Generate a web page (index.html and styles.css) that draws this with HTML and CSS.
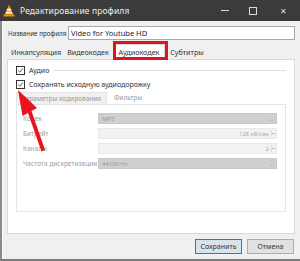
FILE: index.html
```html
<!DOCTYPE html>
<html lang="ru">
<head>
<meta charset="utf-8">
<link rel="stylesheet" href="styles.css">
</head>
<body>
<div class="win">
  <div class="titlebar">
    <svg class="logo" width="12" height="13" viewBox="0 0 12 13">
      <path d="M6 0.5 L10.5 11 L1.5 11 Z" fill="#f08a00"/>
      <path d="M4.2 4.8 L7.8 4.8 L8.4 6.4 L3.6 6.4 Z" fill="#fff"/>
      <path d="M3.1 7.8 L8.9 7.8 L9.5 9.4 L2.5 9.4 Z" fill="#fff"/>
      <rect x="0.5" y="10.5" width="11" height="2" rx="0.6" fill="#f08a00"/>
    </svg>
    <span class="title">Редактирование профиля</span>
    <div class="ctrls">
      <span class="min"></span>
      <span class="max"></span>
      <span class="close">✕</span>
    </div>
  </div>
  <div class="content">
    <div class="namerow">
      <span class="lbl">Название профиля</span>
      <div class="input">Video for Youtube HD</div>
    </div>
    <div class="tabs">
      <span class="tab t1">Инкапсуляция</span>
      <span class="tab t2">Видеокодек</span>
      <span class="tab active">Аудиокодек</span>
      <span class="tab t4">Субтитры</span>
    </div>
    <div class="panel">
      <div class="chk-row group">
        <span class="cb"><svg viewBox="0 0 9 9"><path d="M1.5 4.6 L3.6 6.6 L7.6 2" fill="none" stroke="#333" stroke-width="1.1"/></svg></span>
        <span>Аудио</span>
        <span class="gline"></span>
      </div>
      <div class="chk-row">
        <span class="cb"><svg viewBox="0 0 9 9"><path d="M1.5 4.6 L3.6 6.6 L7.6 2" fill="none" stroke="#333" stroke-width="1.1"/></svg></span>
        <span>Сохранять исходную аудиодорожку</span>
      </div>
      <div class="subtabs">
        <span class="stab active">Параметры кодирования</span>
        <span class="stab">Фильтры</span>
      </div>
      <div class="subpanel">
        <div class="frow"><span class="flbl">Кодек</span><div class="combo">MP3<span class="arr">⌄</span></div></div>
        <div class="frow"><span class="flbl">Битрейт</span><div class="spin">128 кб/сек<span class="sp"></span></div></div>
        <div class="frow"><span class="flbl">Каналы</span><div class="spin">2<span class="sp"></span></div></div>
        <div class="frow"><span class="flbl">Частота дискретизации</span><div class="combo">44100 Hz<span class="arr">⌄</span></div></div>
      </div>
    </div>
    <div class="footer">
      <span class="btn primary">Сохранить</span>
      <span class="btn">Отмена</span>
    </div>
  </div>
  <div class="hl"></div>
  <svg class="arrow" width="60" height="80" viewBox="0 0 60 80">
    <path d="M18 90 L37 108 L31.5 111 L45 150 L41.5 151.5 L28 113 L22.5 116 Z" transform="translate(0,-85)" fill="#e8141c"/>
  </svg>
</div>
</body>
</html>
```
FILE: styles.css
```css
* { box-sizing: border-box; }
html, body { margin: 0; padding: 0; }
body {
  width: 300px; height: 261px; overflow: hidden;
  font-family: "Noto Sans", "Open Sans", sans-serif;
  font-size: 7px; color: #333;
}
.win {
  position: relative;
  width: 300px; height: 261px;
  background: #f0f0f0;
  border-left: 2px solid #8a8a8a;
  border-bottom: 2px solid #7a7a7a;
  display: flex; flex-direction: column;
}
.titlebar {
  height: 21px; background: #3b3b3b; color: #f2f2f2;
  display: flex; align-items: center;
  padding-left: 3px; margin-left: -2px;
}
.logo { margin-right: 5px; }
.title { font-size: 8.5px; color: #eee; letter-spacing: 0.1px; }
.ctrls { margin-left: auto; display: flex; align-items: center; height: 100%; }
.ctrls span { display: flex; align-items: center; justify-content: center; height: 100%; }
.min { width: 26px; margin-right: 2px; }
.min::before { content: ""; width: 8px; height: 1px; background: #ddd; }
.max { width: 26px; }
.max::before { content: ""; width: 6px; height: 6px; border: 1px solid #ddd; }
.close { width: 34px; font-size: 8px; color: #ddd; }
.content {
  flex: 1; display: flex; flex-direction: column;
  padding: 5px 5px 0 4px;
  border-left: 1px solid #fbfbfb;
}
.namerow { display: flex; align-items: center; height: 14px; }
.lbl { flex: none; width: 61px; font-size: 6.3px; padding-left: 1px; white-space: nowrap; }
.input {
  flex: 1; height: 14px; background: #fff; border: 1px solid #a9a9a9;
  padding-left: 2px; line-height: 12px; font-size: 7.5px; color: #222;
}
.tabs { display: flex; margin-top: 5px; height: 14px; padding-left: 1px; }
.tab {
  flex: none; font-size: 7.2px; line-height: 14px; color: #333; text-align: center;
  white-space: nowrap;
}
.t1 { width: 56px; }
.t2 { width: 48px; }
.t4 { width: 42px; }
.tab.active {
  width: 52px; margin: -1px 1px 0 1px;
  background: #fff; border: 1px solid #d9d9d9; border-bottom: none;
  line-height: 15px; height: 15px;
}
.panel {
  height: 175px; background: #fff; border: 1px solid #d9d9d9;
  padding: 5px 8px 0 8px;
  display: flex; flex-direction: column;
}
.chk-row { display: flex; align-items: center; height: 10px; font-size: 7px; }
.chk-row + .chk-row { margin-top: 4px; }
.cb {
  width: 9px; height: 9px; border: 1px solid #333; background: #fff;
  margin-right: 4px; display: flex;
}
.cb svg { width: 100%; height: 100%; }
.gline { flex: 1; height: 1px; background: #e2e2e2; margin-left: 4px; }
.subtabs { display: flex; margin-top: 3px; height: 12px; }
.stab { font-size: 6.5px; color: #999; line-height: 12px; padding: 0 7px; }
.stab.active { background: #f0f0f0; border: 1px solid #e4e4e4; border-bottom: none; padding: 0 5px 0 4px; }
.subpanel {
  height: 108px; border: 1px solid #e4e4e4; background: #fff;
  padding: 8px 8px 0 6px; display: flex; flex-direction: column; gap: 4px;
}
.frow { display: flex; align-items: center; height: 11px; }
.flbl { flex: none; width: 75px; font-size: 6.5px; color: #a0a0a0; white-space: nowrap; }
.combo, .spin {
  flex: 1; height: 11px; font-size: 6px; color: #aaa; display: flex; align-items: center;
  padding-left: 3px;
}
.combo { background: #cfcfcf; border: 1px solid #c8c8c8; color: #9a9a9a; }
.spin { background: #f2f2f2; border: 1px solid #e8e8e8; justify-content: flex-end; padding-right: 1px; }
.arr { margin-left: auto; font-size: 6px; color: #aaa; padding-right: 2px; line-height: 6px; }
.sp { width: 4px; height: 7px; margin-left: 2px; border-left: 1px solid #ddd;
  background: linear-gradient(#bbb,#bbb) center/3px 1px no-repeat; }
.footer { display: flex; justify-content: flex-end; gap: 5px; margin-top: 5px; padding-right: 1px; }
.btn {
  width: 47px; height: 15px; background: #e1e1e1; border: 1px solid #adadad;
  font-size: 7px; display: flex; align-items: center; justify-content: center; color: #333;
}
.btn.primary { border: 1px solid #2a7ad0; box-shadow: inset 0 0 0 1px #cde3f7; }
.hl {
  position: absolute; left: 111px; top: 41px; width: 55px; height: 19px;
  border: 3px solid #e0141c;
}
.arrow { position: absolute; left: -2px; top: 85px; }
```
